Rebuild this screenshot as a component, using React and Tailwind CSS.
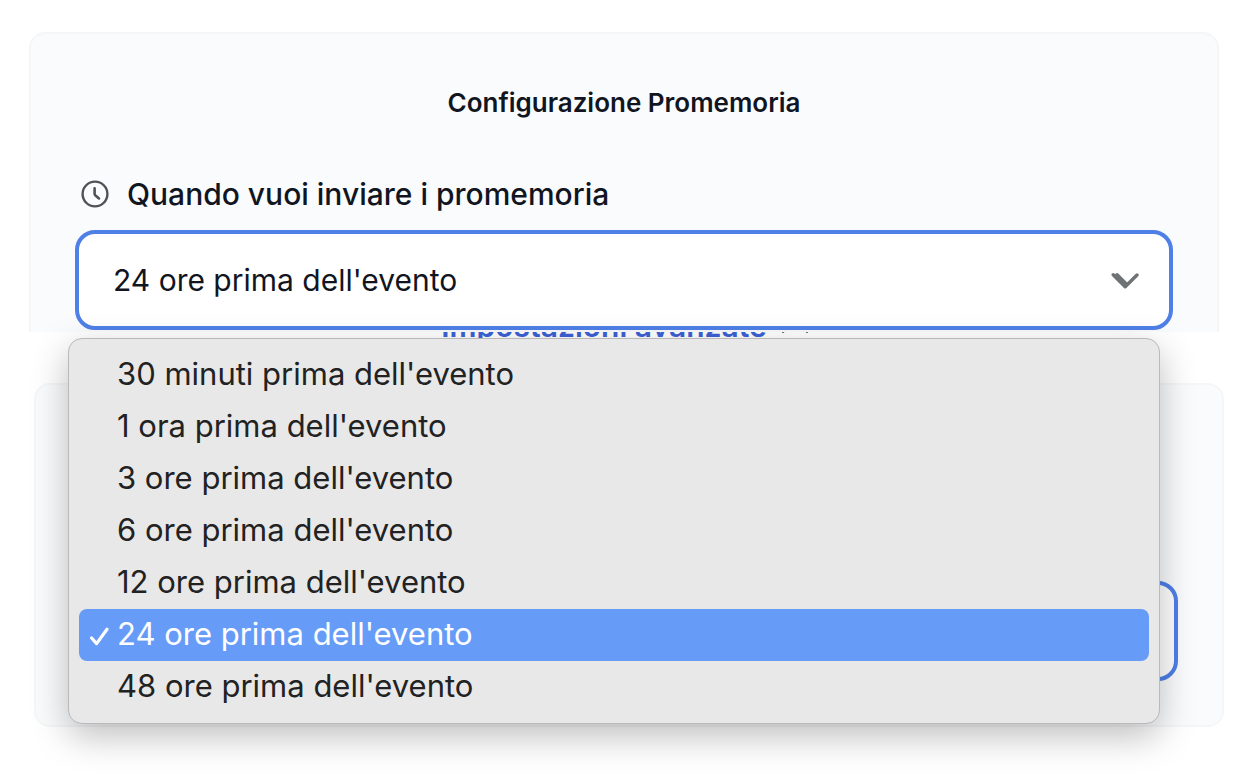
import { useState } from 'react';
import { ChevronUp } from 'lucide-react';

const REMINDER_OPTIONS = [
  { value: '30m', label: "30 minuti prima dell'evento" },
  { value: '1h', label: "1 ora prima dell'evento" },
  { value: '3h', label: "3 ore prima dell'evento" },
  { value: '6h', label: "6 ore prima dell'evento" },
  { value: '12h', label: "12 ore prima dell'evento" },
  { value: '24h', label: "24 ore prima dell'evento" },
  { value: '48h', label: "48 ore prima dell'evento" },
];

function ClockIcon() {
  return (
    <svg viewBox="0 0 28 28" className="size-7 text-[#4f5255]" fill="none" stroke="currentColor" strokeLinecap="round" strokeLinejoin="round" aria-hidden="true">
      <circle cx="14" cy="14" r="12.4" strokeWidth="2.4" />
      <path d="M13.6 8.2v5.6q0 .8.6 1.4l3.8 3.2" strokeWidth="2.6" />
    </svg>
  );
}

function SelectArrow() {
  return (
    <svg viewBox="0 0 28 18" className="pointer-events-none absolute inset-y-0 right-[34px] my-auto h-[18px] w-7 text-[#6f7375]" fill="none" stroke="currentColor" strokeLinecap="round" strokeLinejoin="round" aria-hidden="true">
      <path d="M2.2 3.8l12 12L26 4" strokeWidth="3.4" />
      <path d="M6 3.8l9 9" strokeWidth="3.6" />
      <path d="M4.6 4.8l9.6 9.4" strokeWidth="3" />
    </svg>
  );
}

function CheckMark() {
  return (
    <svg viewBox="0 0 20 20" className="size-5" fill="none" stroke="currentColor" strokeWidth="3.2" strokeLinecap="round" strokeLinejoin="round" aria-hidden="true">
      <path d="M2.6 12l5 5.6L18 3.2" />
    </svg>
  );
}

function OptionsMenu({ selected, onSelect }) {
  return (
    <div
      role="listbox"
      aria-label="Quando vuoi inviare i promemoria"
      className="absolute -left-[7px] right-[13px] top-full z-10 mt-2 rounded-[14px] border border-[#b9b9b9] bg-[#e8e8e8] p-2.5 shadow-[0_12px_36px_rgba(0,0,0,0.26)]"
    >
      {REMINDER_OPTIONS.map((option) => {
        const isSelected = option.value === selected;
        return (
          <button
            key={option.value}
            type="button"
            role="option"
            aria-selected={isSelected}
            onClick={() => onSelect(option.value)}
            className={`flex h-13 w-full items-center rounded-lg pb-0.5 text-left text-[31px] ${
              isSelected ? 'bg-[#669cf8] text-white' : 'text-[#222222]'
            }`}
          >
            <span className="flex w-[38px] shrink-0 justify-center pl-0.5 pt-1">{isSelected && <CheckMark />}</span>
            {option.label}
          </button>
        );
      })}
    </div>
  );
}

export default function App() {
  const [reminder, setReminder] = useState('24h');

  return (
    <main className="min-h-screen bg-white pb-13 pt-8 font-[Inter,sans-serif] text-[#11151f]">
      {/* Reminder settings */}
      <section className="ml-[29px] mr-[41px] h-[300px] rounded-t-2xl border-2 border-b-0 border-[#f5f6f7] bg-[#fafbfd] px-11 pt-12">
        <h2 className="text-center text-[26px] font-semibold leading-[42px]">Configurazione Promemoria</h2>

        <div className="mt-12 flex items-center gap-[18px] px-1.5">
          <ClockIcon />
          <label htmlFor="reminder" className="text-[30px] font-medium leading-11">
            Quando vuoi inviare i promemoria
          </label>
        </div>

        <div className="relative mt-[14px]">
          <select
            id="reminder"
            value={reminder}
            onChange={(e) => setReminder(e.target.value)}
            className="block h-[100px] w-full appearance-none rounded-[20px] border-4 border-[#4f80e8] bg-white px-[34px] text-[30px] outline-none"
          >
            {REMINDER_OPTIONS.map((option) => (
              <option key={option.value} value={option.value}>{option.label}</option>
            ))}
          </select>
          <SelectArrow />
          <OptionsMenu selected={reminder} onSelect={setReminder} />
        </div>
      </section>

      <div className="flex h-[51px] items-start justify-center overflow-hidden">
        <a href="#avanzate" className="-mt-[30px] flex items-center gap-1 text-[30px] font-semibold leading-8 text-[#3b62d6]">
          Impostazioni avanzate
          <ChevronUp className="size-12 text-[#555a60]" strokeWidth={1} />
        </a>
      </div>

      {/* Next field, mostly under the open menu */}
      <section className="ml-[34px] mr-9 flex h-[344px] items-end rounded-2xl border-2 border-[#f5f6f7] bg-[#fafbfd] px-11 pb-11">
        <input
          type="text"
          aria-label="Impostazioni avanzate"
          className="h-[100px] w-full rounded-[20px] border-4 border-[#4f80e8] bg-white px-8 outline-none"
        />
      </section>
    </main>
  );
}
